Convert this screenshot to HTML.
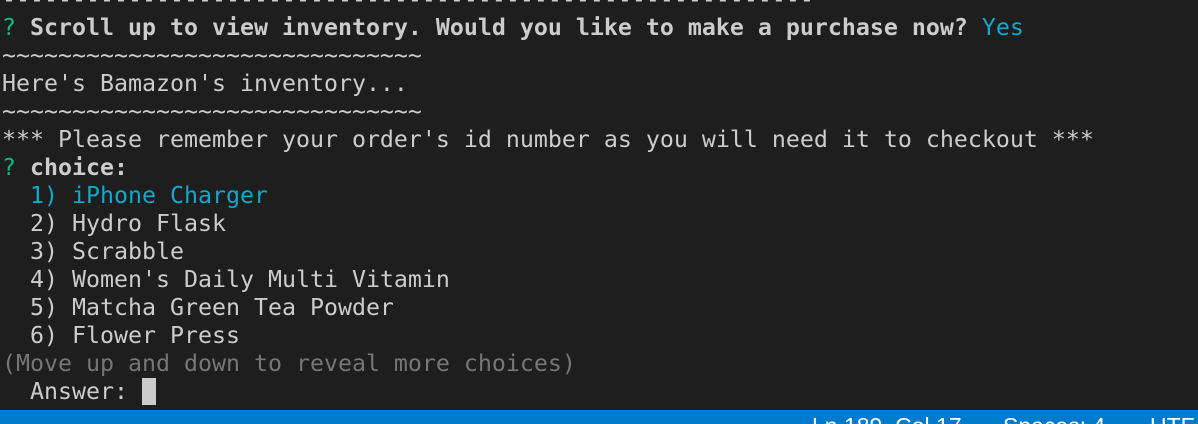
<!DOCTYPE html>
<html><head><style>
html,body{margin:0;padding:0;width:1198px;height:424px;overflow:hidden;background:#1e1e1e}
#t{position:absolute;left:2px;top:-14px;font-family:"DejaVu Sans Mono","Liberation Mono",monospace;font-size:23.25px;line-height:28px;color:#cccccc;white-space:pre}
.g{color:#0dbc79}.c{color:#11a8cd}.b{font-weight:bold}.d{color:#767676}
.cur{display:inline-block;width:14px;height:27px;background:#cccccc;vertical-align:-6px}
#sb{position:absolute;left:0;top:410px;width:1198px;height:14px;background:#007acc;overflow:hidden}
#sb span{position:absolute;top:3px;font-family:"Liberation Sans",sans-serif;font-size:23px;line-height:26px;color:#fff;white-space:pre}
</style></head><body>
<div id="t">----------------------------------------------------------
<span class="g">?</span> <span class="b">Scroll up to view inventory. Would you like to make a purchase now?</span> <span class="c">Yes</span>
~~~~~~~~~~~~~~~~~~~~~~~~~~~~~~
Here's Bamazon's inventory...
~~~~~~~~~~~~~~~~~~~~~~~~~~~~~~
*** Please remember your order's id number as you will need it to checkout ***
<span class="g">?</span> <span class="b">choice:</span>
<span class="c">  1) iPhone Charger</span>
  2) Hydro Flask
  3) Scrabble
  4) Women's Daily Multi Vitamin
  5) Matcha Green Tea Powder
  6) Flower Press
<span class="d">(Move up and down to reveal more choices)</span>
  Answer: <span class="cur"></span></div>
<div id="sb"><span style="left:812px">Ln 189, Col 17</span><span style="left:1003px">Spaces: 4</span><span style="left:1150px">UTF-8</span></div>
</body></html>
